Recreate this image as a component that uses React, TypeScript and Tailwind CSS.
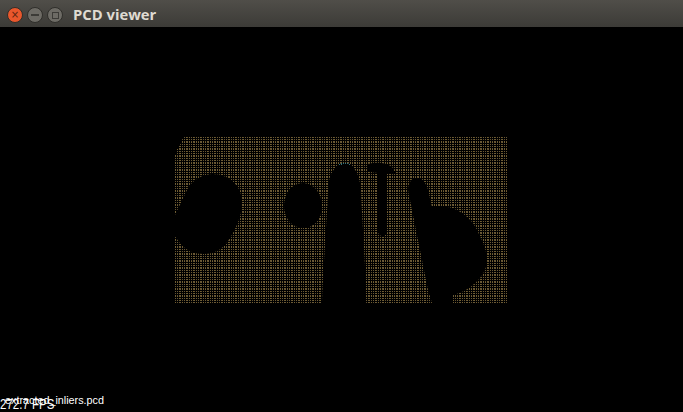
const FONT_LABEL = { fontFamily: '"Liberation Sans", sans-serif' };

const DOT_COLS = [0, 2, 4, 5];
const DOT_ROWS = [0, 2, 4, 5];
const DOT_SHADES = ["#6e5a34", "#5f5030", "#75602f", "#665838"];

function WindowButton({ className, children }: { className: string; children?: React.ReactNode }) {
  return (
    <div className={`flex h-[16px] w-[16px] items-center justify-center rounded-full border border-[#2f2e2a] ${className}`}>
      {children}
    </div>
  );
}

function PointCloud() {
  return (
    <svg viewBox="0 0 683 385" width="683" height="385" shapeRendering="crispEdges">
      <defs>
        <pattern id="dots" x="175" y="109" width="7" height="7" patternUnits="userSpaceOnUse">
          {DOT_ROWS.map((y, r) =>
            DOT_COLS.map((x, c) => (
              <rect key={`${x}-${y}`} x={x} y={y} width="1" height="1" fill={DOT_SHADES[(r + c * 3) % 4]} />
            ))
          )}
        </pattern>
      </defs>
      <g transform="translate(0,-27)">
        <path d="M183 137H508V303H175V155Z" fill="url(#dots)" />
        <g fill="#000" shapeRendering="auto">
          <path d="M213 174C229 174 242 186 242 202C242 216 236 228 230 238C224 248 216 254 204 254C192 254 183 250 175 236L175 215C180 205 184 196 188 188C194 179 203 174 213 174Z" />
          <path d="M303 183C314 183 322 194 322 206C322 219 314 228 303 228C292 228 284 218 284 206C284 194 292 183 303 183Z" />
          <path d="M345 163C354 163 360 176 361 190C362 220 366 270 366 303H322C323 270 327 220 328 190C328 176 335 163 345 163Z" />
          <path d="M368 164C376 162 386 162 392 167L396 174H387V233L384 236H381L378 233V173C375 173 371 172 368 171Z" />
          <path d="M417 178C423 178 426 183 428 190L432 207C438 206 446 206 452 208C463 212 473 220 478 232C484 244 487 252 487 260C487 270 481 278 474 284C468 290 460 293 453 295V303H432L428 290L408 190C408 183 411 178 417 178Z" />
        </g>
        <path d="M339 165Q345 162 351 165" fill="none" stroke="#2f6f78" strokeWidth="1" strokeDasharray="1 1" />
      </g>
    </svg>
  );
}

export default function App() {
  return (
    <div className="flex h-[412px] w-[683px] flex-col overflow-hidden bg-black">
      <div className="flex h-[27px] shrink-0 items-center bg-gradient-to-b from-[#504e49] to-[#3c3b37] pl-[7px] pt-[3px]">
        <div className="flex gap-[3px]">
          <WindowButton className="bg-[#e9572c]">
            <span className="text-[10px] leading-none text-[#5a2410]" style={{ fontFamily: '"DejaVu Sans", sans-serif' }}>×</span>
          </WindowButton>
          <WindowButton className="ml-[1px] bg-[#6d6b65]">
            <div className="h-[2px] w-[8px] bg-[#3c3b37]" />
          </WindowButton>
          <WindowButton className="ml-[1px] bg-[#6d6b65]">
            <div className="h-[7px] w-[7px] border border-[#3c3b37]" />
          </WindowButton>
        </div>
        <span className="ml-[10px] -translate-y-[1px] text-[14.8px] font-bold text-[#dfdbd2]" style={{ fontFamily: '"Open Sans", sans-serif' }}>PCD viewer</span>
      </div>
      <div className="relative flex-1">
        <PointCloud />
        <span className="absolute left-[5px] top-[368px] text-[10.8px] leading-none text-white" style={FONT_LABEL}>extracted_inliers.pcd</span>
        <span className="absolute bottom-0 left-0 origin-bottom scale-y-[1.25] text-[11.5px] leading-none text-white" style={FONT_LABEL}>272.7 FPS</span>
      </div>
    </div>
  );
}
